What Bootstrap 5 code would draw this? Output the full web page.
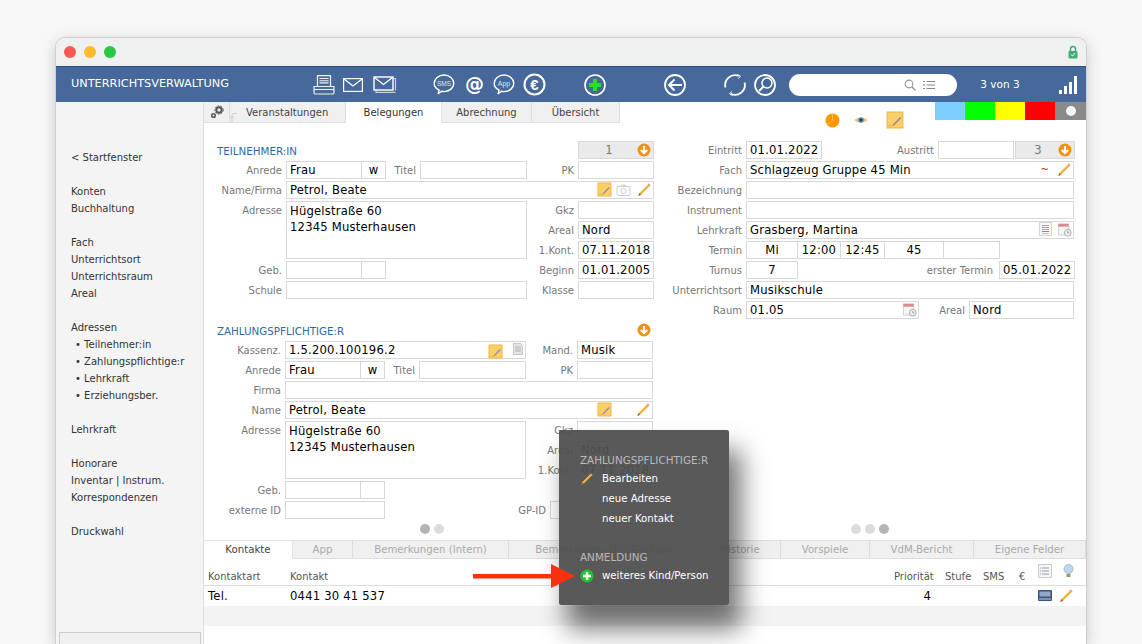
<!DOCTYPE html>
<html lang="de">

<head>
    <meta charset="UTF-8">
    <title>Unterrichtsverwaltung</title>
    <link rel="stylesheet" href="https://cdn.jsdelivr.net/npm/bootstrap@5.3.0/dist/css/bootstrap.min.css">
    <script src="https://cdn.jsdelivr.net/npm/bootstrap@5.3.0/dist/js/bootstrap.bundle.min.js"></script>
    <style>
        html, body { height: 100%; overflow: hidden; }
        body { background: #f8f8f8; font-family: "DejaVu Sans", sans-serif; font-size: 10px; padding: 38px 56px 0; color: #333; }
        .app-window { position: relative; height: 606px; border-radius: 9px 9px 0 0; background: #fff; box-shadow: 0 0 0 1px #cfcfcf, 0 4px 16px rgba(0, 0, 0, .22); }
        .title-bar { height: 28px; background: #eff1f1; border-radius: 9px 9px 0 0; padding: 0 8px; }
        .traffic { width: 12px; height: 12px; border-radius: 50%; }
        .tl-red { background: #fd5754; }
        .tl-yellow { background: #febb2e; }
        .tl-green { background: #29c83f; }

        .tool-bar { height: 36px; background: #46689a; border-top: 1px solid #2d4f82; padding: 0 9px 0 15px; flex-wrap: nowrap; justify-content: flex-start; }
        .tool-title { width: 158px; color: #fff; font-size: 11.3px; white-space: nowrap; }
        .tool-group { gap: 8px; }
        .tool-g1 { margin-left: 84px; }
        .tool-stack { margin-left: 2px; }
        .tool-g2 { margin-left: 36px; gap: 7px; }
        .tool-plus { margin-left: 38px; }
        .tool-back { margin-left: 58px; }
        .tool-g4 { margin-left: 38px; }
        .search-pill { width: 168px; height: 22px; margin-left: 13px; background: #fff; border-radius: 11px; padding-right: 22px; gap: 7px; }
        .tool-count { width: 86px; margin-right: 16px; color: #fff; font-size: 10.5px; text-align: center; }

        .app-main { height: 542px; }
        .side-nav { width: 148px; background: #f4f4f4; padding: 47px 0 0 15px; border-right: 1px solid #ddd; position: relative; flex: none; }
        .side-link { display: block; height: 17px; line-height: 17px; padding: 0; color: #333; font-size: 10px; white-space: nowrap; }
        .side-link:hover { color: #333; }
        .side-gap { margin-top: 17px; }
        .side-sub { padding-left: 4px; }
        .side-box { position: absolute; left: 3px; right: 2px; top: 530px; height: 30px; background: #f0f0f0; border: 1px solid #ccc; }

        .tab-row { height: 21px; }
        .tab-tool { width: 26px; background: #f0f0f0; border-bottom: 1px solid #ddd; border-right: 1px solid #ddd; flex: none; }
        .tab-blank { width: 16px; background: #f0f0f0; border-bottom: 1px solid #ddd; flex: none; }
        .top-tabs { border: 0; flex-wrap: nowrap; }
        .top-tabs .nav-link, .low-tabs .nav-link { border-radius: 0; margin: 0; padding: 0; text-align: center; white-space: nowrap; font-size: 10px; }
        .top-tabs .nav-link { height: 21px; line-height: 21px; background: #f0f0f0; color: #444; border: 0; border-right: 1px solid #ddd; border-bottom: 1px solid #ddd; }
        .top-tabs .nav-link.active { background: #fff; color: #333; border-bottom-color: #fff; }
        .top-tabs .nav-link.tt-1 { width: 100px; text-align: left; }
        .tt-2 { width: 96px; }
        .tt-3 { width: 90px; }
        .tt-4 { width: 88px; }
        .tab-icons { margin-left: 205px; padding-top: 9px; gap: 14px; align-self: flex-start; }
        .swatches { margin-left: auto; height: 18px; align-self: flex-start; }
        .swatch { width: 30px; height: 18px; }
        .sw-blue { background: #7ccfff; }
        .sw-green { background: #00ff00; }
        .sw-yellow { background: #ffff00; }
        .sw-red { background: #ff0000; }
        .sw-gray { width: 31px; background: #8a8a8a; }
        .sw-dot { width: 10px; height: 10px; border-radius: 50%; background: #f4f4f4; }

        .form-area { height: 417px; padding-top: 18px; }
        .panel-left { width: 456px; }
        .panel-right { width: 420px; }
        .panel-shift { margin-left: -1px; margin-top: 20px; }
        .frow { display: flex; height: 18px; margin-bottom: 2px; }
        .fhead { color: #2f6aa5; font-size: 10.3px; line-height: 20px; padding-left: 13px; white-space: nowrap; }
        .fhead-shift { padding-left: 14px; }
        .flbl { color: #777; font-size: 10px; line-height: 20px; text-align: right; padding-right: 4px; margin: 0; white-space: nowrap; flex: none; }
        .form-control.fbox { flex: none; height: 18px; min-height: 0; border: 1px solid #d8d8d8; border-radius: 0; padding: 0 3px; font-size: 11.6px; line-height: 16px; color: #000; background: #fff; box-shadow: none; font-family: "DejaVu Sans", sans-serif; letter-spacing: .2px; }
        textarea.form-control.fbox { height: 58px; margin-bottom: 2px; resize: none; line-height: 16px; padding-top: 1px; overflow: hidden; }
        .fbox-gap { margin-left: -1px; }
        .form-control.fbox-c { text-align: center; }
        .fwrap { position: relative; flex: none; }
        .fwrap .form-control.fbox { width: 100%; }
        .ficon { position: absolute; top: 1px; }
        .ic-r2 { right: 2px; }
        .ic-r22 { right: 23px; top: 3px; }
        .ic-r28 { right: 22px; }
        .ic-r41 { right: 41px; }
        .ic-r44 { right: 42px; }
        .ic-tilde { right: 25px; color: #e02020; font-size: 10px; line-height: 16px; }
        .step-box { height: 18px; background: #eaeaea; border: 1px solid #d8d8d8; color: #777; font-size: 11.6px; line-height: 17px; text-align: center; position: relative; flex: none; padding-right: 14px; }
        .step-box svg { position: absolute; right: 2px; top: 1px; }
        .step-left { margin-right: 6px; }
        .step-right { margin-left: 1px; }
        .head-arrow { margin: 2px 3px 0 auto; flex: none; }

        .wd-82 { width: 82px; } .wd-76 { width: 76px; } .wd-25 { width: 25px; } .wd-34 { width: 34px; }
        .wd-107 { width: 107px; } .wd-51 { width: 51px; } .wd-241 { width: 241px; } .wd-368 { width: 368px; }
        .wd-100 { width: 100px; } .wd-165 { width: 165px; } .wd-80 { width: 80px; } .wd-86 { width: 86px; }
        .wd-116 { width: 116px; } .wd-60 { width: 60px; } .wd-328 { width: 328px; } .wd-52 { width: 52px; }
        .wd-44 { width: 44px; } .wd-45 { width: 45px; } .wd-57 { width: 57px; } .wd-201 { width: 201px; }
        .wd-173 { width: 173px; } .wd-50 { width: 50px; } .wd-105 { width: 105px; }
        .flbl-wide { padding-right: 6px; }

        .pager { gap: 4px; margin-top: auto; height: 19px; padding-bottom: 3px; align-items: center; justify-content: center; }
        .pager-dot { width: 10px; height: 10px; border-radius: 50%; background: #dcdcdc; }
        .pager-on { background: #b4b4b4; }

        .low-tabs { flex-wrap: nowrap; border: 0; height: 19px; }
        .low-tabs .nav-link { height: 19px; line-height: 17px; background: #f0f0f0; color: #aaa; border: 1px solid #ddd; border-left: 0; font-size: 10.2px; }
        .low-tabs .nav-link.active { background: #fff; color: #444; border-bottom-color: #fff; }
        .lt-1 { width: 89px; } .lt-2 { width: 60px; } .lt-3 { width: 156px; } .lt-4 { width: 191px; }
        .lt-5 { width: 81px; } .lt-6 { width: 89px; } .lt-7 { width: 104px; } .lt-8 { width: 112px; }

        .table.contact-table { table-layout: fixed; width: 882px; margin: 0; font-size: 10px; }
        .table.contact-table th, .table.contact-table td { padding: 0 0 0 4px; background: transparent; white-space: nowrap; box-shadow: none; }
        .table.contact-table th { height: 26px; border-bottom: 1px solid #ddd; color: #555; font-weight: 400; vertical-align: bottom; line-height: 17px; }
        .table.contact-table td { height: 20px; border: 0; color: #000; font-size: 11.6px; letter-spacing: .2px; line-height: 20px; vertical-align: middle; }
        .table.contact-table .row-alt td { background: #f3f3f3; }
        .col-a { width: 82px; } .col-b { width: 604px; } .col-c { width: 51px; } .col-d { width: 38px; } .col-e { width: 36px; } .col-f { width: 25px; } .col-g { width: 46px; }
        .table.contact-table th.th-icons { vertical-align: top; padding: 5px 0 0; }
        .table.contact-table td.td-prio { text-align: right; padding-right: 10px; }
        .table.contact-table td.td-icons { padding: 0; }
        .row-icons { gap: 7px; margin-left: -2px; }

        .ctx-menu { display: block; position: absolute; left: 503px; top: 392px; width: 170px; height: 175px; min-width: 0; padding: 21px 0 0; margin: 0; background: rgba(80, 80, 80, .95); border: 0; border-radius: 2px; box-shadow: 10px 22px 26px 2px rgba(0, 0, 0, .55); z-index: 5; font-size: 10px; }
        .ctx-head { color: #b9b9b9; padding: 0 0 0 21px; height: 18px; line-height: 18px; font-size: 10.4px; font-weight: 400; margin: 0; white-space: nowrap; }
        .ctx-item { color: #fff; padding: 0 0 0 43px; height: 20px; line-height: 20px; position: relative; white-space: nowrap; font-size: 10.2px; }
        .ctx-item:hover { color: #fff; background: transparent; }
        .ctx-item svg { position: absolute; left: 21px; top: 3px; }
        .ctx-space { height: 19px; }
        .call-arrow { position: absolute; left: 417px; top: 526px; z-index: 6; }
    </style>
</head>

<body>
    <svg width="0" height="0" class="position-absolute">
        <symbol id="down" viewBox="0 0 14 14">
            <circle cx="7" cy="7" r="6.500" fill="#f39019" />
            <path d="M7 3v7M3.800 7L7 10.200 10.200 7" fill="none" stroke="#fff" stroke-width="2" />
        </symbol>
        <symbol id="pencil" viewBox="0 0 16 16">
            <path d="M1.500 15L2.500 11.800 12.600 1.700 14.300 3.400 4.200 13.500z" fill="#f3a52b" />
            <path d="M12.600 1.700L14.300 3.400 13.300 4.400 11.600 2.700z" fill="#e59a9a" />
            <path d="M1.500 15L2.500 11.800 4.200 13.500z" fill="#7a6540" />
            <path d="M3.200 12L12 3.200" stroke="#ffd98a" stroke-width=".8" fill="none" />
        </symbol>
        <symbol id="note" viewBox="0 0 16 16">
            <path d="M1 1h14v14H1z" fill="#fbd063" stroke="#efb951" />
            <path d="M6 13l.6-1.600 6-6 1 1-6 6z" fill="#9a86b8" />
            <path d="M2 13h5" stroke="#e6a93f" stroke-width=".8" />
        </symbol>
        <symbol id="cal" viewBox="0 0 16 16">
            <path d="M1.500 2h11v12h-11z" fill="#f5f5f5" stroke="#cfcfcf" />
            <path d="M1.500 2h11v3h-11z" fill="#d98a8a" />
            <circle cx="11.500" cy="11.500" r="3.600" fill="#eee" stroke="#aaa" />
            <path d="M11.500 9.500v2h1.600" fill="none" stroke="#888" stroke-width=".8" />
        </symbol>
        <symbol id="bubble" viewBox="0 0 22 22">
            <path d="M6 17C3 15.700 1.200 13.300 1.200 10.300 1.200 5.800 5.600 2 11 2s9.800 3.800 9.800 8.300-4.400 8.300-9.800 8.300c-.9 0-1.700-.1-2.500-.3L4.800 21c.7-1.100 1.100-2.500 1.200-4z" fill="none" stroke="#fff" stroke-width="1.400" />
        </symbol>
    </svg>

    <div class="app-window">
        <div class="title-bar d-flex align-items-center gap-2">
            <span class="traffic tl-red"></span>
            <span class="traffic tl-yellow"></span>
            <span class="traffic tl-green"></span>
            <svg class="ms-auto" width="10" height="14" viewBox="0 0 10 14">
                <path d="M2.500 6V4a2.500 2.500 0 0 1 5 0v2" fill="none" stroke="#3cae7a" stroke-width="1.500" />
                <rect x=".5" y="6" width="9" height="7.500" rx="1" fill="#3cae7a" />
                <path d="M3 9.600l1.500 1.500L7 8" fill="none" stroke="#fff" />
            </svg>
        </div>

        <nav class="navbar tool-bar py-0">
            <span class="tool-title">UNTERRICHTSVERWALTUNG</span>
            <div class="d-flex align-items-center tool-group tool-g1">
                <svg width="22" height="20" viewBox="0 0 22 20" fill="none" stroke="#eef2f7" stroke-width="1.200">
                    <path d="M4.500 11V.7h13V11" />
                    <path d="M6.500 3.500h9M6.500 5.700h9M6.500 7.900h9" stroke-width="1.100" />
                    <path d="M1 11.500h20v3H1z" />
                    <path d="M2 14.500c-1.500 1-1.500 4 0 4.500h18c1.500-.5 1.500-3.500 0-4.500" />
                </svg>
                <svg width="20" height="14" viewBox="0 0 20 14" fill="none" stroke="#fff" stroke-width="1.200">
                    <rect x=".6" y=".6" width="18.800" height="12.800" />
                    <path d="M1 1l9 7 9-7" />
                </svg>
                <svg class="tool-stack" width="24" height="17" viewBox="0 0 24 17" fill="none" stroke="#fff">
                    <path d="M20.500 2.500h2v12M3 14.500v1.800h19.500" stroke="#c5d0e0" stroke-width="1.200" />
                    <rect x="1" y="1" width="19" height="13" stroke-width="1.400" />
                    <path d="M1.500 1.500l9 7 9-7" stroke-width="1.300" />
                </svg>
            </div>
            <div class="d-flex align-items-center tool-group tool-g2">
                <svg width="23" height="23" viewBox="0 0 23 23">
                    <use href="#bubble" width="22" height="22" />
                    <text x="11" y="12.800" text-anchor="middle" font-size="6.500" font-family="Liberation Sans, sans-serif" fill="#dfe6f0">SMS</text>
                </svg>
                <svg width="23" height="23" viewBox="0 0 23 23">
                    <text x="11.500" y="17.500" text-anchor="middle" font-size="19" font-weight="700" font-family="DejaVu Sans, sans-serif" fill="#fff">@</text>
                </svg>
                <svg width="23" height="23" viewBox="0 0 23 23">
                    <use href="#bubble" width="22" height="22" />
                    <text x="11" y="13" text-anchor="middle" font-size="7" font-family="Liberation Sans, sans-serif" fill="#dfe6f0">App</text>
                </svg>
                <svg width="23" height="23" viewBox="0 0 23 23">
                    <circle cx="11.500" cy="11.500" r="10" fill="none" stroke="#fff" stroke-width="2" />
                    <text x="11.500" y="17" text-anchor="middle" font-size="15" font-weight="700" font-family="Liberation Sans, sans-serif" fill="#fff">€</text>
                </svg>
            </div>
            <svg class="tool-plus" width="22" height="22" viewBox="0 0 22 22">
                <circle cx="11" cy="11" r="10" fill="none" stroke="#fff" stroke-width="1.600" />
                <path d="M11 5v12M5 11h12" stroke="#27e01f" stroke-width="4" />
            </svg>
            <svg class="tool-back" width="22" height="22" viewBox="0 0 22 22" fill="none" stroke="#fff">
                <circle cx="11" cy="11" r="10" stroke-width="1.800" />
                <path d="M18 11H5M10.500 5.500L5 11l5.500 5.500" stroke-width="2" />
            </svg>
            <div class="d-flex align-items-center tool-group tool-g4">
                <svg width="22" height="22" viewBox="0 0 22 22" fill="none" stroke="#fff" stroke-width="1.800">
                    <path d="M14.800 2A9.800 9.800 0 0 0 1.500 13.500" />
                    <path d="M20.500 8.500A9.800 9.800 0 0 1 6.900 19.900" />
                    <path d="M13.500 .5l3 1.800-2.400 2.200M8.500 21.500l-3-1.800 2.400-2.200" stroke-width="1" />
                </svg>
                <svg width="22" height="22" viewBox="0 0 22 22" fill="none" stroke="#fff">
                    <circle cx="11" cy="11" r="10" stroke-width="1.800" />
                    <circle cx="13" cy="9" r="5" stroke-width="1.500" />
                    <path d="M9.500 12.500L5 17" stroke-width="2" />
                </svg>
            </div>
            <div class="search-pill d-flex align-items-center justify-content-end">
                <svg width="12" height="12" viewBox="0 0 12 12" fill="none" stroke="#999">
                    <circle cx="5" cy="5" r="3.800" stroke-width="1.200" />
                    <path d="M7.800 7.800L11.500 11.500" stroke-width="1.500" />
                </svg>
                <svg width="12" height="10" viewBox="0 0 12 10" fill="none" stroke="#888">
                    <path d="M0 1.500h2M3.500 1.500H12M0 5h2M3.500 5H12M0 8.500h2M3.500 8.500H12" />
                </svg>
            </div>
            <span class="tool-count">3 von 3</span>
            <svg width="18" height="18" viewBox="0 0 18 18" fill="#fff">
                <rect x="0" y="14" width="3" height="4" />
                <rect x="5" y="10" width="3" height="8" />
                <rect x="10" y="6" width="3" height="12" />
                <rect x="15" y="0" width="3" height="18" />
            </svg>
        </nav>

        <div class="app-main d-flex">
            <nav class="side-nav nav flex-column flex-nowrap d-block">
                <a class="side-link nav-link" href="#">&lt; Startfenster</a>
                <a class="side-link nav-link side-gap" href="#">Konten</a>
                <a class="side-link nav-link" href="#">Buchhaltung</a>
                <a class="side-link nav-link side-gap" href="#">Fach</a>
                <a class="side-link nav-link" href="#">Unterrichtsort</a>
                <a class="side-link nav-link" href="#">Unterrichtsraum</a>
                <a class="side-link nav-link" href="#">Areal</a>
                <a class="side-link nav-link side-gap" href="#">Adressen</a>
                <a class="side-link nav-link side-sub" href="#">• Teilnehmer:in</a>
                <a class="side-link nav-link side-sub" href="#">• Zahlungspflichtige:r</a>
                <a class="side-link nav-link side-sub" href="#">• Lehrkraft</a>
                <a class="side-link nav-link side-sub" href="#">• Erziehungsber.</a>
                <a class="side-link nav-link side-gap" href="#">Lehrkraft</a>
                <a class="side-link nav-link side-gap" href="#">Honorare</a>
                <a class="side-link nav-link" href="#">Inventar | Instrum.</a>
                <a class="side-link nav-link" href="#">Korrespondenzen</a>
                <a class="side-link nav-link side-gap" href="#">Druckwahl</a>
                <div class="side-box"></div>
            </nav>

            <div class="flex-grow-1 overflow-hidden">
                <div class="tab-row d-flex">
                    <div class="tab-tool d-flex align-items-center justify-content-center">
                        <svg width="14" height="14" viewBox="0 0 14 14" fill="none" stroke="#555">
                            <circle cx="9" cy="5" r="2.700" stroke-width="2" />
                            <circle cx="9" cy="5" r="4.200" stroke-width="1" stroke-dasharray="1.500 1.500" />
                            <circle cx="3.500" cy="10.500" r="1.800" stroke-width="1.500" />
                        </svg>
                    </div>
                    <div class="tab-blank d-flex align-items-end">
                        <svg width="7" height="10" viewBox="0 0 7 10" fill="none" stroke="#ccc"><path d="M2 10V3.500A2 2 0 0 1 4 1.500h3M0 5h4" /></svg>
                    </div>
                    <ul class="nav nav-tabs top-tabs">
                        <li class="nav-item"><a class="nav-link tt-1" href="#">Veranstaltungen</a></li>
                        <li class="nav-item"><a class="nav-link active tt-2" href="#">Belegungen</a></li>
                        <li class="nav-item"><a class="nav-link tt-3" href="#">Abrechnung</a></li>
                        <li class="nav-item"><a class="nav-link tt-4" href="#">Übersicht</a></li>
                    </ul>
                    <div class="tab-icons d-flex align-items-center">
                        <svg width="15" height="15" viewBox="0 0 15 15">
                            <circle cx="7.500" cy="7.500" r="7" fill="#ff9800" />
                            <path d="M7.500 1v6.500L2.500 11" fill="none" stroke="#ffc766" stroke-width=".8" />
                        </svg>
                        <svg width="14" height="10" viewBox="0 0 14 10">
                            <path d="M.5 5C3 1.500 11 1.500 13.500 5 11 8.500 3 8.500 .5 5z" fill="#e9c28a" />
                            <circle cx="7" cy="5" r="2.800" fill="#5a8bb0" />
                            <circle cx="7" cy="5" r="1.200" fill="#223" />
                        </svg>
                        <svg class="ms-1" width="18" height="18"><use href="#note" /></svg>
                    </div>
                    <div class="swatches d-flex">
                        <span class="swatch sw-blue"></span>
                        <span class="swatch sw-green"></span>
                        <span class="swatch sw-yellow"></span>
                        <span class="swatch sw-red"></span>
                        <span class="swatch sw-gray d-flex align-items-center justify-content-center"><span class="sw-dot"></span></span>
                    </div>
                </div>

                <div class="form-area d-flex">
                    <div class="panel-left d-flex flex-column">
                        <div class="frow">
                            <div class="fhead flex-grow-1">TEILNEHMER:IN</div>
                            <div class="step-box step-left wd-76">1<svg width="14" height="14"><use href="#down" /></svg></div>
                        </div>
                        <div class="frow">
                            <label class="flbl wd-82">Anrede</label>
                            <input class="form-control fbox wd-76" value="Frau">
                            <input class="form-control fbox fbox-gap fbox-c wd-25" value="w">
                            <label class="flbl wd-34">Titel</label>
                            <input class="form-control fbox wd-107">
                            <label class="flbl wd-51">PK</label>
                            <input class="form-control fbox wd-76">
                        </div>
                        <div class="frow">
                            <label class="flbl wd-82">Name/Firma</label>
                            <div class="fwrap wd-368">
                                <input class="form-control fbox" value="Petrol, Beate">
                                <svg class="ficon ic-r44" width="15" height="15"><use href="#note" /></svg>
                                <svg class="ficon ic-r22" width="15" height="12" viewBox="0 0 15 12" fill="none" stroke="#ccc">
                                    <rect x="1" y="2.500" width="13" height="9" rx="1" /><circle cx="7.500" cy="7" r="2.500" /><path d="M5 2.500l1-1.500h3l1 1.500" />
                                </svg>
                                <svg class="ficon ic-r2" width="15" height="15"><use href="#pencil" /></svg>
                            </div>
                        </div>
                        <div class="d-flex">
                            <label class="flbl wd-82">Adresse</label>
                            <textarea class="form-control fbox wd-241">Hügelstraße 60
12345 Musterhausen</textarea>
                            <div>
                                <div class="frow"><label class="flbl wd-51">Gkz</label><input class="form-control fbox wd-76"></div>
                                <div class="frow"><label class="flbl wd-51">Areal</label><input class="form-control fbox wd-76" value="Nord"></div>
                                <div class="frow"><label class="flbl wd-51">1.Kont.</label><input class="form-control fbox fbox-c wd-76" value="07.11.2018"></div>
                            </div>
                        </div>
                        <div class="frow">
                            <label class="flbl wd-82">Geb.</label>
                            <input class="form-control fbox wd-76">
                            <input class="form-control fbox fbox-gap wd-25">
                            <div class="wd-34"></div>
                            <div class="wd-107"></div>
                            <label class="flbl wd-51">Beginn</label>
                            <input class="form-control fbox fbox-c wd-76" value="01.01.2005">
                        </div>
                        <div class="frow">
                            <label class="flbl wd-82">Schule</label>
                            <input class="form-control fbox wd-241">
                            <label class="flbl wd-51">Klasse</label>
                            <input class="form-control fbox wd-76">
                        </div>

                        <div class="panel-shift">
                            <div class="frow">
                                <div class="fhead fhead-shift">ZAHLUNGSPFLICHTIGE:R</div>
                                <svg class="head-arrow" width="14" height="14"><use href="#down" /></svg>
                                <div class="step-left"></div>
                            </div>
                            <div class="frow">
                                <label class="flbl wd-82">Kassenz.</label>
                                <div class="fwrap wd-241">
                                    <input class="form-control fbox" value="1.5.200.100196.2">
                                    <svg class="ficon ic-r22" width="15" height="15"><use href="#note" /></svg>
                                    <svg class="ficon ic-r2" width="12" height="14" viewBox="0 0 12 14">
                                        <path d="M1.500 1.500h7l2 2v9h-9z" fill="#e4e4e4" stroke="#c8c8c8" />
                                        <path d="M3 5h6M3 7h6M3 9h6" stroke="#aaa" stroke-width=".8" />
                                    </svg>
                                </div>
                                <label class="flbl wd-51">Mand.</label>
                                <input class="form-control fbox wd-76" value="Musik">
                            </div>
                            <div class="frow">
                                <label class="flbl wd-82">Anrede</label>
                                <input class="form-control fbox wd-76" value="Frau">
                                <input class="form-control fbox fbox-gap fbox-c wd-25" value="w">
                                <label class="flbl wd-34">Titel</label>
                                <input class="form-control fbox wd-107">
                                <label class="flbl wd-51">PK</label>
                                <input class="form-control fbox wd-76">
                            </div>
                            <div class="frow">
                                <label class="flbl wd-82">Firma</label>
                                <input class="form-control fbox wd-368">
                            </div>
                            <div class="frow">
                                <label class="flbl wd-82">Name</label>
                                <div class="fwrap wd-368">
                                    <input class="form-control fbox" value="Petrol, Beate">
                                    <svg class="ficon ic-r41" width="15" height="15"><use href="#note" /></svg>
                                    <svg class="ficon ic-r2" width="15" height="15"><use href="#pencil" /></svg>
                                </div>
                            </div>
                            <div class="d-flex">
                                <label class="flbl wd-82">Adresse</label>
                                <textarea class="form-control fbox wd-241">Hügelstraße 60
12345 Musterhausen</textarea>
                                <div>
                                    <div class="frow"><label class="flbl wd-51">Gkz</label><input class="form-control fbox wd-76"></div>
                                    <div class="frow"><label class="flbl wd-51">Areal</label><input class="form-control fbox wd-76" value="Nord"></div>
                                    <div class="frow"><label class="flbl wd-51">1.Kont.</label><input class="form-control fbox fbox-c wd-76" value="07.11.2018"></div>
                                </div>
                            </div>
                            <div class="frow">
                                <label class="flbl wd-82">Geb.</label>
                                <input class="form-control fbox wd-76">
                                <input class="form-control fbox fbox-gap wd-25">
                            </div>
                            <div class="frow">
                                <label class="flbl wd-82">externe ID</label>
                                <input class="form-control fbox wd-100">
                                <label class="flbl wd-165">GP-ID</label>
                                <input class="form-control fbox wd-80">
                            </div>
                        </div>
                        <div class="pager d-flex">
                            <span class="pager-dot pager-on"></span>
                            <span class="pager-dot"></span>
                        </div>
                    </div>

                    <div class="panel-right d-flex flex-column">
                        <div class="frow">
                            <label class="flbl wd-86">Eintritt</label>
                            <input class="form-control fbox fbox-c wd-76" value="01.01.2022">
                            <label class="flbl wd-116">Austritt</label>
                            <input class="form-control fbox wd-76">
                            <div class="step-box step-right wd-60">3<svg width="14" height="14"><use href="#down" /></svg></div>
                        </div>
                        <div class="frow">
                            <label class="flbl wd-86">Fach</label>
                            <div class="fwrap wd-328">
                                <input class="form-control fbox" value="Schlagzeug Gruppe 45 Min">
                                <span class="ficon ic-tilde">~</span>
                                <svg class="ficon ic-r2" width="15" height="15"><use href="#pencil" /></svg>
                            </div>
                        </div>
                        <div class="frow">
                            <label class="flbl wd-86">Bezeichnung</label>
                            <input class="form-control fbox wd-328">
                        </div>
                        <div class="frow">
                            <label class="flbl wd-86">Instrument</label>
                            <input class="form-control fbox wd-328">
                        </div>
                        <div class="frow">
                            <label class="flbl wd-86">Lehrkraft</label>
                            <div class="fwrap wd-328">
                                <input class="form-control fbox" value="Grasberg, Martina">
                                <svg class="ficon ic-r28" width="13" height="14" viewBox="0 0 13 14">
                                    <path d="M.5 .5h12v13H.5z" fill="#f8f8f8" stroke="#d5d5d5" />
                                    <path d="M3 3.500h7" stroke="#f0a020" /><path d="M3 5.500h7" stroke="#8fb070" /><path d="M3 7.500h7" stroke="#f0a020" /><path d="M3 9.500h7" stroke="#e06060" /><path d="M3 11.500h7" stroke="#f0c040" />
                                </svg>
                                <svg class="ficon ic-r2" width="15" height="15"><use href="#cal" /></svg>
                            </div>
                        </div>
                        <div class="frow">
                            <label class="flbl wd-86">Termin</label>
                            <input class="form-control fbox fbox-c wd-52" value="Mi">
                            <input class="form-control fbox fbox-gap fbox-c wd-44" value="12:00">
                            <input class="form-control fbox fbox-gap fbox-c wd-45" value="12:45">
                            <input class="form-control fbox fbox-gap fbox-c wd-60" value="45">
                            <input class="form-control fbox fbox-gap wd-57">
                        </div>
                        <div class="frow">
                            <label class="flbl wd-86">Turnus</label>
                            <input class="form-control fbox fbox-c wd-52" value="7">
                            <label class="flbl flbl-wide wd-201">erster Termin</label>
                            <input class="form-control fbox fbox-c wd-76" value="05.01.2022">
                        </div>
                        <div class="frow">
                            <label class="flbl wd-86">Unterrichtsort</label>
                            <input class="form-control fbox wd-328" value="Musikschule">
                        </div>
                        <div class="frow">
                            <label class="flbl wd-86">Raum</label>
                            <div class="fwrap wd-173">
                                <input class="form-control fbox" value="01.05">
                                <svg class="ficon ic-r2" width="15" height="15"><use href="#cal" /></svg>
                            </div>
                            <label class="flbl wd-50">Areal</label>
                            <input class="form-control fbox wd-105" value="Nord">
                        </div>
                        <div class="pager d-flex">
                            <span class="pager-dot"></span>
                            <span class="pager-dot"></span>
                            <span class="pager-dot pager-on"></span>
                        </div>
                    </div>
                </div>

                <ul class="nav nav-tabs low-tabs">
                    <li class="nav-item"><a class="nav-link active lt-1" href="#">Kontakte</a></li>
                    <li class="nav-item"><a class="nav-link lt-2" href="#">App</a></li>
                    <li class="nav-item"><a class="nav-link lt-3" href="#">Bemerkungen (Intern)</a></li>
                    <li class="nav-item"><a class="nav-link lt-4" href="#">Bemerkungen (MillGo/App)</a></li>
                    <li class="nav-item"><a class="nav-link lt-5" href="#">Historie</a></li>
                    <li class="nav-item"><a class="nav-link lt-6" href="#">Vorspiele</a></li>
                    <li class="nav-item"><a class="nav-link lt-7" href="#">VdM-Bericht</a></li>
                    <li class="nav-item"><a class="nav-link lt-8" href="#">Eigene Felder</a></li>
                </ul>

                <table class="table contact-table">
                    <colgroup>
                        <col class="col-a"><col class="col-b"><col class="col-c"><col class="col-d"><col class="col-e"><col class="col-f"><col class="col-g">
                    </colgroup>
                    <thead>
                        <tr>
                            <th>Kontaktart</th>
                            <th>Kontakt</th>
                            <th>Priorität</th>
                            <th>Stufe</th>
                            <th>SMS</th>
                            <th>€</th>
                            <th class="th-icons">
                                <div class="d-flex row-icons">
                                    <svg width="14" height="14" viewBox="0 0 14 14">
                                        <path d="M.5 .5h13v13H.5z" fill="#f6f6f6" stroke="#c5c9d0" />
                                        <path d="M4 4h7M4 7h7M4 10h7" stroke="#8e9cb0" />
                                        <path d="M2 4h1M2 7h1M2 10h1" stroke="#8e9cb0" />
                                    </svg>
                                    <svg class="ms-1" width="11" height="15" viewBox="0 0 11 15">
                                        <circle cx="5.500" cy="5" r="4.500" fill="#bcd6ee" stroke="#90aac2" stroke-width=".7" />
                                        <path d="M3.500 10h4v3h-4z" fill="#9a9a70" />
                                    </svg>
                                </div>
                            </th>
                        </tr>
                    </thead>
                    <tbody>
                        <tr>
                            <td>Tel.</td>
                            <td>0441 30 41 537</td>
                            <td class="td-prio">4</td>
                            <td></td>
                            <td></td>
                            <td></td>
                            <td class="td-icons">
                                <div class="d-flex row-icons align-items-center">
                                    <svg width="14" height="12" viewBox="0 0 14 12">
                                        <rect width="14" height="11" rx="1" fill="#3a5584" />
                                        <rect x="1.500" y="1.500" width="11" height="5" fill="#90a8c8" />
                                        <path d="M1 9h12" stroke="#c8d0dc" />
                                    </svg>
                                    <svg width="15" height="15"><use href="#pencil" /></svg>
                                </div>
                            </td>
                        </tr>
                        <tr class="row-alt">
                            <td></td><td></td><td></td><td></td><td></td><td></td><td></td>
                        </tr>
                    </tbody>
                </table>
            </div>
        </div>

        <div class="dropdown-menu ctx-menu">
            <h6 class="ctx-head">ZAHLUNGSPFLICHTIGE:R</h6>
            <a class="dropdown-item ctx-item" href="#"><svg width="14" height="14"><use href="#pencil" /></svg>Bearbeiten</a>
            <a class="dropdown-item ctx-item" href="#">neue Adresse</a>
            <a class="dropdown-item ctx-item" href="#">neuer Kontakt</a>
            <div class="ctx-space"></div>
            <h6 class="ctx-head">ANMELDUNG</h6>
            <a class="dropdown-item ctx-item" href="#">
                <svg width="14" height="14" viewBox="0 0 14 14">
                    <circle cx="7" cy="7" r="6.500" fill="#1fc62c" />
                    <path d="M7 3v8M3 7h8" stroke="#fff" stroke-width="2.400" />
                </svg>weiteres Kind/Person</a>
        </div>

        <svg class="call-arrow" width="103" height="24" viewBox="0 0 103 24">
            <path d="M0 10h78V0l24 12-24 12V14.500H0z" fill="#fb3010" />
        </svg>
    </div>
</body>

</html>
